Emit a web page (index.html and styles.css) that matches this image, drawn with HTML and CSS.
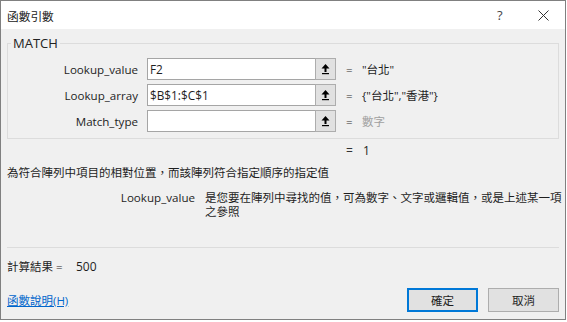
FILE: index.html
```html
<!DOCTYPE html>
<html lang="zh-Hant">
<head>
<meta charset="utf-8">
<title>函數引數</title>
<link rel="stylesheet" href="styles.css">
</head>
<body>
<div class="dialog">
  <div class="titlebar">
    <span class="title">函數引數</span>
    <span class="help">?</span>
    <span class="close">
      <svg width="11" height="11" viewBox="0 0 11 11"><path d="M0.5 0.5 L10.5 10.5 M10.5 0.5 L0.5 10.5" stroke="#333" stroke-width="1" fill="none"/></svg>
    </span>
  </div>
  <div class="body">
    <fieldset class="group">
      <legend class="group-title">MATCH</legend>
      <div class="args">
        <span class="arg-label">Lookup_value</span>
        <span class="ref-input">F2</span>
        <span class="ref-btn"><svg width="9" height="11" viewBox="0 0 9 11"><path d="M4.5 0 L0.5 4.5 L3.5 4.5 L3.5 8 L5.5 8 L5.5 4.5 L8.5 4.5 Z" fill="#000"/><rect x="1" y="9" width="7" height="1.2" fill="#000"/></svg></span>
        <span class="eq">=</span>
        <span class="val">"台北"</span>

        <span class="arg-label">Lookup_array</span>
        <span class="ref-input">$B$1:$C$1</span>
        <span class="ref-btn"><svg width="9" height="11" viewBox="0 0 9 11"><path d="M4.5 0 L0.5 4.5 L3.5 4.5 L3.5 8 L5.5 8 L5.5 4.5 L8.5 4.5 Z" fill="#000"/><rect x="1" y="9" width="7" height="1.2" fill="#000"/></svg></span>
        <span class="eq">=</span>
        <span class="val">{"台北","香港"}</span>

        <span class="arg-label">Match_type</span>
        <span class="ref-input"></span>
        <span class="ref-btn"><svg width="9" height="11" viewBox="0 0 9 11"><path d="M4.5 0 L0.5 4.5 L3.5 4.5 L3.5 8 L5.5 8 L5.5 4.5 L8.5 4.5 Z" fill="#000"/><rect x="1" y="9" width="7" height="1.2" fill="#000"/></svg></span>
        <span class="eq">=</span>
        <span class="val val-hint">數字</span>
      </div>
    </fieldset>
    <div class="result-row"><span class="eq-inline">=</span><span>1</span></div>
    <p class="desc">為符合陣列中項目的相對位置，而該陣列符合指定順序的指定值</p>
    <div class="argdesc">
      <span class="argdesc-name">Lookup_value</span>
      <span class="argdesc-text">是您要在陣列中尋找的值，可為數字、文字或邏輯值，或是上述某一項之參照</span>
    </div>
    <hr class="sep">
    <div class="calc"><span class="calc-label">計算結果 =</span><span class="calc-val">500</span></div>
    <div class="footer">
      <a class="help-link" href="#">函數說明(H)</a>
      <div class="buttons">
        <button class="btn btn-default">確定</button>
        <button class="btn">取消</button>
      </div>
    </div>
  </div>
</div>
</body>
</html>
```
FILE: styles.css
```css
html, body {
  margin: 0;
  padding: 0;
  background: #ffffff;
}
body {
  font-family: "Open Sans", "Noto Sans CJK TC", sans-serif;
  font-size: 11.5px;
  color: #1e1e1e;
}
.dialog {
  width: 566px;
  height: 320px;
  box-sizing: border-box;
  border: 1px solid #808080;
  background: #f0f0f0;
  display: flex;
  flex-direction: column;
}
.titlebar {
  height: 28px;
  background: #ffffff;
  display: flex;
  align-items: center;
  padding-left: 6px;
}
.title {
  flex: 1;
  font-size: 11.7px;
  color: #222;
}
.help {
  font-size: 13px;
  color: #444;
  width: 11px;
  margin-right: 30px;
}
.close {
  display: flex;
  margin-right: 16px;
}
.body {
  padding: 6px 6px 0 6px;
  display: flex;
  flex-direction: column;
}
.group {
  margin: 0;
  padding: 7px 0 6px 0;
  border: 1px solid #dcdcdc;
  min-width: 0;
}
.group-title {
  margin-left: 3px;
  padding: 0 2px;
  font-size: 13px;
  line-height: 16px;
  color: #222;
}
.args {
  display: grid;
  grid-template-columns: 139px 168px 21px 26px 1fr;
  grid-auto-rows: 22px;
  row-gap: 4px;
  align-items: center;
}
.arg-label {
  text-align: right;
  padding-right: 9px;
  font-size: 11.6px;
}
.ref-input {
  height: 22px;
  box-sizing: border-box;
  background: #fff;
  border: 1px solid #a5a5a5;
  border-right: none;
  padding-left: 2px;
  line-height: 20px;
  font-size: 11.8px;
}
.ref-btn {
  height: 22px;
  box-sizing: border-box;
  background: #e1e1e1;
  border: 1px solid #adadad;
  display: flex;
  align-items: center;
  justify-content: center;
}
.eq {
  padding-left: 10px;
  color: #333;
}
.val {
  color: #1e1e1e;
}
.val-hint {
  color: #a0a0a0;
}
.result-row {
  margin-top: 4px;
  line-height: 15px;
  padding-left: 339px;
  display: flex;
  font-size: 12px;
}
.eq-inline {
  width: 17px;
  color: #333;
}
.desc {
  margin: 7px 0 0 0;
  line-height: 15px;
}
.argdesc {
  margin-top: 11px;
  display: grid;
  grid-template-columns: 188px 360px;
  column-gap: 10px;
  line-height: 14px;
}
.argdesc-name {
  text-align: right;
  font-size: 11.6px;
}
.sep {
  margin: 28px 0 0 0;
  border: none;
  height: 1px;
  background: #dcdcdc;
}
.calc {
  margin-top: 11px;
  line-height: 15px;
  display: flex;
}
.calc-label {
  width: 69px;
}
.calc-val {
  font-size: 12px;
}
.footer {
  margin-top: 14px;
  display: flex;
  align-items: center;
  justify-content: space-between;
}
.help-link {
  color: #0066cc;
  text-decoration: underline;
}
.buttons {
  display: flex;
  gap: 10px;
}
.btn {
  width: 71px;
  height: 24px;
  box-sizing: border-box;
  background: #e1e1e1;
  border: 1px solid #adadad;
  font-family: inherit;
  font-size: 11.5px;
  color: #1e1e1e;
  padding: 0;
  margin: 0;
}
.btn-default {
  border: 2px solid #0078d7;
}
```
